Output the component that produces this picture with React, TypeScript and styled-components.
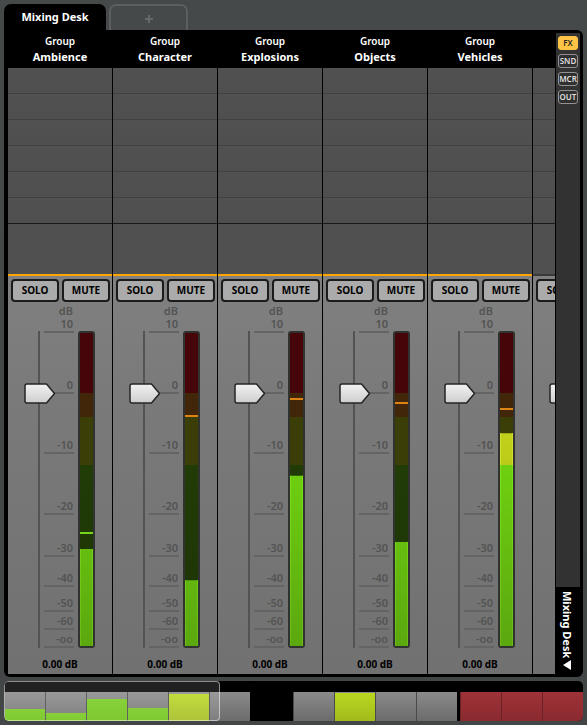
import React, { useState } from "react";
import styled, { createGlobalStyle } from "styled-components";

const THUMB = `url("data:image/svg+xml,${encodeURIComponent(
  `<svg xmlns="http://www.w3.org/2000/svg" width="32" height="21" viewBox="0 0 32 21"><defs><linearGradient id="g" x1="0" y1="0" x2="0" y2="1"><stop offset="0" stop-color="#f2f2f2"/><stop offset="1" stop-color="#cdcdcd"/></linearGradient></defs><path d="M3 1H22.5L30.5 10.5L22.5 20H3Q1 20 1 18V3Q1 1 3 1Z" fill="url(#g)" stroke="#242626" stroke-width="1.5" stroke-linejoin="round"/></svg>`
)}")`;

const GlobalStyle = createGlobalStyle`
  *, *::before, *::after { box-sizing: border-box; }
  body { margin: 0; background: #434646; }
  body, button, input { font-family: "Noto Sans", "Open Sans", sans-serif; }
`;

const Page = styled.div`
  display: flex;
  flex-direction: column;
  height: 100vh;
  min-height: 520px;
  padding: 4px;
  overflow: hidden;
  background: linear-gradient(#464949, #424646);
`;

const Tabs = styled.nav`
  display: flex;
  gap: 3px;
  flex: none;
  height: 26px;
`;

const Tab = styled.button`
  width: 102px;
  padding: 0 0 2px;
  border: 0;
  border-radius: 7px 7px 0 0;
  background: #000;
  color: #fff;
  font-size: 11px;
  font-weight: 700;
`;

const AddTab = styled(Tab)`
  display: flex;
  align-items: center;
  justify-content: center;
  width: 79px;
  padding: 2px 0 0;
  border: 2px solid #5c5f5f;
  border-bottom: 0;
  background: transparent;
  color: #666969;
`;

const Panel = styled.main`
  display: flex;
  flex: 1;
  min-height: 0;
  padding: 0 3px 3px 4px;
  border-radius: 0 6px 6px 6px;
  background: #000;
`;

const Strips = styled.div`
  display: flex;
  flex: 1;
  gap: 1px;
  min-width: 0;
  overflow: hidden;
`;

const StripBox = styled.section`
  display: flex;
  flex: none;
  flex-direction: column;
  width: 104px;
`;

const StripHead = styled.header`
  display: flex;
  flex: none;
  flex-direction: column;
  height: 38px;
  padding-top: 4px;
  color: #fff;
  text-align: center;
`;

const Kind = styled.span`
  font-size: 10px;
  font-weight: 600;
  line-height: 14px;
`;

const Name = styled.span`
  font-size: 11px;
  font-weight: 700;
  line-height: 18px;
`;

const Inserts = styled.div<{ $active: boolean }>`
  flex: none;
  height: 208px;
  border-bottom: 2px solid ${(p) => (p.$active ? "#ffa500" : "#3a3838")};
  background: #505050;
`;

const Slot = styled.div`
  height: 26px;
  border-bottom: 1px solid #414141;
  background: linear-gradient(#515151, #4f4f4f);
  &:last-child { border-color: #191919; }
`;

const Controls = styled.div`
  display: flex;
  flex: 1;
  flex-direction: column;
  min-height: 0;
  padding-top: 3px;
  background: linear-gradient(#808080, #7a7a7a 30%, #717171);
`;

const Switches = styled.div`
  display: flex;
  flex: none;
  gap: 3px;
  padding: 0 2px 0 3px;
`;

const SwitchButton = styled.button`
  flex: none;
  width: 48px;
  height: 23px;
  padding: 0 0 1px;
  border: 2px solid #1b1b1b;
  border-radius: 4px;
  background: #ababab;
  color: #000;
  font-size: 10px;
  font-weight: 700;
  line-height: 18px;
  &[aria-pressed="true"] { background: #ffc445; }
`;

const Desk = styled.div`
  display: flex;
  flex: 1;
  min-height: 0;
  padding-left: 16px;
`;

const FaderSlot = styled.div`
  position: relative;
  z-index: 1;
  width: 20px;
  margin-top: 29px;
  padding-left: 14px;
`;

const Rail = styled.div`
  width: 2px;
  height: 100%;
  background: #535353;
`;

const Fader = styled.input`
  position: absolute;
  top: -10px;
  left: 0;
  width: 32px;
  height: calc(100% + 21px);
  margin: 0;
  appearance: none;
  background: transparent;
  writing-mode: vertical-lr;
  direction: rtl;
  &::-webkit-slider-runnable-track { width: 32px; background: transparent; }
  &::-webkit-slider-thumb {
    width: 32px;
    height: 21px;
    appearance: none;
    border: 0;
    background: ${THUMB} no-repeat;
  }
`;

const Scale = styled.div`
  display: flex;
  flex-direction: column;
  width: 30px;
  color: #535353;
  font-size: 11px;
  font-weight: 600;
  line-height: 13px;
  text-align: right;
`;

const Tick = styled.div<{ $span: number }>`
  display: flex;
  flex: ${(p) => p.$span} 1 0;
  flex-direction: column;
  justify-content: flex-end;
  min-height: 0;
  padding: 0 1px 1px 0;
  border-bottom: 2px solid #646464;
`;

const TopTick = styled(Tick)`
  flex: none;
  height: 31px;
`;

const Meter = styled.div`
  position: relative;
  width: 17px;
  margin: 29px 0 0 4px;
  border: 2px solid #30322f;
  border-radius: 3px;
  background: linear-gradient(#460509 19.2%, #42260a 19.2% 26.8%, #3c3e08 26.8% 42.2%, #213c07 42.2%, #1d3404);
`;

const Lit = styled.div`
  position: absolute;
  inset: 0;
  border: solid #7bdc20;
  border-width: 0 1px;
  background: linear-gradient(#c01818 19.2%, #dd7f12 19.2% 26.8%, #c5d51b 26.8%, #bccb18 42.2%, #6fd010 42.2%, #5ba70f);
  border-image: linear-gradient(#d92525 19.2%, #ee9020 19.2% 26.8%, #d1df2d 26.8% 42.2%, #7de51a 42.2%, #68bb17) 1;
`;

const Peak = styled.div<{ $hot: boolean }>`
  position: absolute;
  right: 0;
  left: 0;
  height: 2px;
  background: ${(p) => (p.$hot ? "#de8415" : "#76d51d")};
`;

const Readout = styled.output`
  flex: none;
  height: 26px;
  padding-top: 6px;
  color: #000;
  font-size: 10px;
  font-weight: 700;
  line-height: 20px;
  text-align: center;
`;

const Sidebar = styled.aside`
  display: flex;
  flex: none;
  flex-direction: column;
  width: 25px;
  padding: 3px 0 0 1px;
`;

const Views = styled.div`
  display: flex;
  flex: 1;
  flex-direction: column;
  gap: 4px;
  padding: 3px 2px;
  background: #323232;
`;

const ViewButton = styled.button<{ $on: boolean }>`
  display: flex;
  align-items: center;
  justify-content: center;
  width: 20px;
  height: 14px;
  padding: 0;
  border: 1px solid ${(p) => (p.$on ? "#ffc445" : "#929292")};
  border-radius: 3px;
  background: ${(p) => (p.$on ? "#ffc445" : "#303030")};
  color: ${(p) => (p.$on ? "#262626" : "#dedede")};
  font-size: 8px;
  font-weight: 600;
  line-height: 12px;
`;

const SideTitle = styled.div`
  display: flex;
  flex: none;
  flex-direction: column;
  align-items: center;
  gap: 2px;
  height: 87px;
  padding-top: 4px;
  padding-right: 2px;
  color: #fff;
  font-size: 11px;
  font-weight: 700;
  line-height: 16px;
`;

const VerticalText = styled.span`
  writing-mode: vertical-rl;
  white-space: nowrap;
`;

const Overview = styled.footer`
  position: relative;
  display: flex;
  flex: none;
  height: 40px;
  margin-top: 4px;
  padding-top: 11px;
  overflow: hidden;
  border-radius: 5px;
  background: #000;
`;

const Cell = styled.div<{ $muted?: boolean }>`
  display: flex;
  flex: 40 1 0;
  flex-direction: column;
  justify-content: flex-end;
  border-left: 1px solid ${(p) => (p.$muted ? "#6a2226" : "#4a4a4a")};
  background: ${(p) => (p.$muted ? "linear-gradient(#9e3238, #8a2a2f)" : "linear-gradient(#8b8b8b, #6b6b6b)")};
`;

const CellLevel = styled.div<{ $hot: boolean }>`
  background: ${(p) => (p.$hot ? "linear-gradient(#b9d820, #a2ba1c)" : "linear-gradient(#74ca1d, #6dc014)")};
`;

const Gap = styled.div<{ $span: number }>`
  flex: ${(p) => p.$span} 1 0;
`;

const Viewport = styled.div`
  position: absolute;
  inset: 0 auto 0 0;
  width: 37.3%;
  border: 1px solid rgba(255, 255, 255, 0.5);
  border-radius: 4px;
  background: rgba(255, 255, 255, 0.13);
`;

type Channel = { name: string; level: number; peak: number; hot: boolean };

// Levels and peaks are measured downwards from the top of the meter, in percent.
const channels: Channel[] = [
  { name: "Ambience", level: 69, peak: 63.6, hot: false },
  { name: "Character", level: 79, peak: 26.2, hot: true },
  { name: "Explosions", level: 45.6, peak: 20.8, hot: true },
  { name: "Objects", level: 66.8, peak: 22, hot: true },
  { name: "Vehicles", level: 32, peak: 24, hot: true },
];

// Each span is the share of the scale between one tick line and the next.
const ticks: [string, number][] = [
  ["0", 58], ["-10", 57], ["-20", 58], ["-30", 39], ["-40", 27], ["-50", 22], ["-60", 15], ["-oo", 15],
];

const overview = [
  { level: 42, hot: false },
  { level: 28, hot: false },
  { level: 75, hot: false },
  { level: 45, hot: false },
  { level: 92, hot: true },
  { level: 0, hot: false },
];

function Toggle({ label }: { label: string }) {
  const [on, setOn] = useState(false);
  return (
    <SwitchButton aria-pressed={on} onClick={() => setOn(!on)}>
      {label}
    </SwitchButton>
  );
}

function Strip({ channel }: { channel?: Channel }) {
  return (
    <StripBox>
      <StripHead>
        {channel && (
          <>
            <Kind>Group</Kind>
            <Name>{channel.name}</Name>
          </>
        )}
      </StripHead>
      <Inserts $active={!!channel}>
        {[0, 1, 2, 3, 4, 5].map((i) => (
          <Slot key={i} />
        ))}
      </Inserts>
      <Controls>
        <Switches>
          <Toggle label="SOLO" />
          {channel && <Toggle label="MUTE" />}
        </Switches>
        <Desk>
          <FaderSlot>
            <Rail />
            <Fader
              type="range"
              min={0}
              max={100}
              step={0.1}
              defaultValue={80.4}
              aria-label={channel ? `${channel.name} volume` : "Volume"}
              aria-valuetext="0.00 dB"
            />
          </FaderSlot>
          {channel && (
            <>
              <Scale>
                <TopTick $span={0}>
                  <span>dB</span>
                  <span>10</span>
                </TopTick>
                {ticks.map(([label, span]) => (
                  <Tick key={label} $span={span}>
                    {label}
                  </Tick>
                ))}
              </Scale>
              <Meter>
                <Lit style={{ clipPath: `inset(${channel.level}% 0 0 0)` }} />
                <Peak $hot={channel.hot} style={{ top: `${channel.peak}%` }} />
              </Meter>
            </>
          )}
        </Desk>
        <Readout>{channel ? "0.00 dB" : ""}</Readout>
      </Controls>
    </StripBox>
  );
}

export default function App() {
  const [view, setView] = useState("FX");
  return (
    <>
      <GlobalStyle />
      <Page>
        <Tabs>
          <Tab>Mixing Desk</Tab>
          <AddTab aria-label="Add tab">
            <svg width="10" height="10" viewBox="0 0 10 10" aria-hidden="true">
              <path d="M5 1V9M1 5H9" stroke="currentColor" strokeWidth="2" />
            </svg>
          </AddTab>
        </Tabs>
        <Panel>
          <Strips>
            {channels.map((c) => (
              <Strip key={c.name} channel={c} />
            ))}
            <Strip />
          </Strips>
          <Sidebar>
            <Views>
              {["FX", "SND", "MCR", "OUT"].map((v) => (
                <ViewButton key={v} $on={v === view} onClick={() => setView(v)}>
                  {v}
                </ViewButton>
              ))}
            </Views>
            <SideTitle>
              <VerticalText>Mixing Desk</VerticalText>
              <svg width="8" height="10" viewBox="0 0 8 10" aria-hidden="true">
                <path d="M8 0V10L0 5Z" fill="#fff" />
              </svg>
            </SideTitle>
          </Sidebar>
        </Panel>
        <Overview>
          {overview.map((c, i) => (
            <Cell key={i}>
              <CellLevel $hot={c.hot} style={{ height: `${c.level}%` }} />
            </Cell>
          ))}
          <Gap $span={43} />
          <Cell />
          <Cell>
            <CellLevel $hot style={{ height: "97%" }} />
          </Cell>
          <Cell />
          <Cell />
          <Gap $span={3} />
          <Cell $muted />
          <Cell $muted />
          <Cell $muted />
          <Viewport />
        </Overview>
      </Page>
    </>
  );
}
